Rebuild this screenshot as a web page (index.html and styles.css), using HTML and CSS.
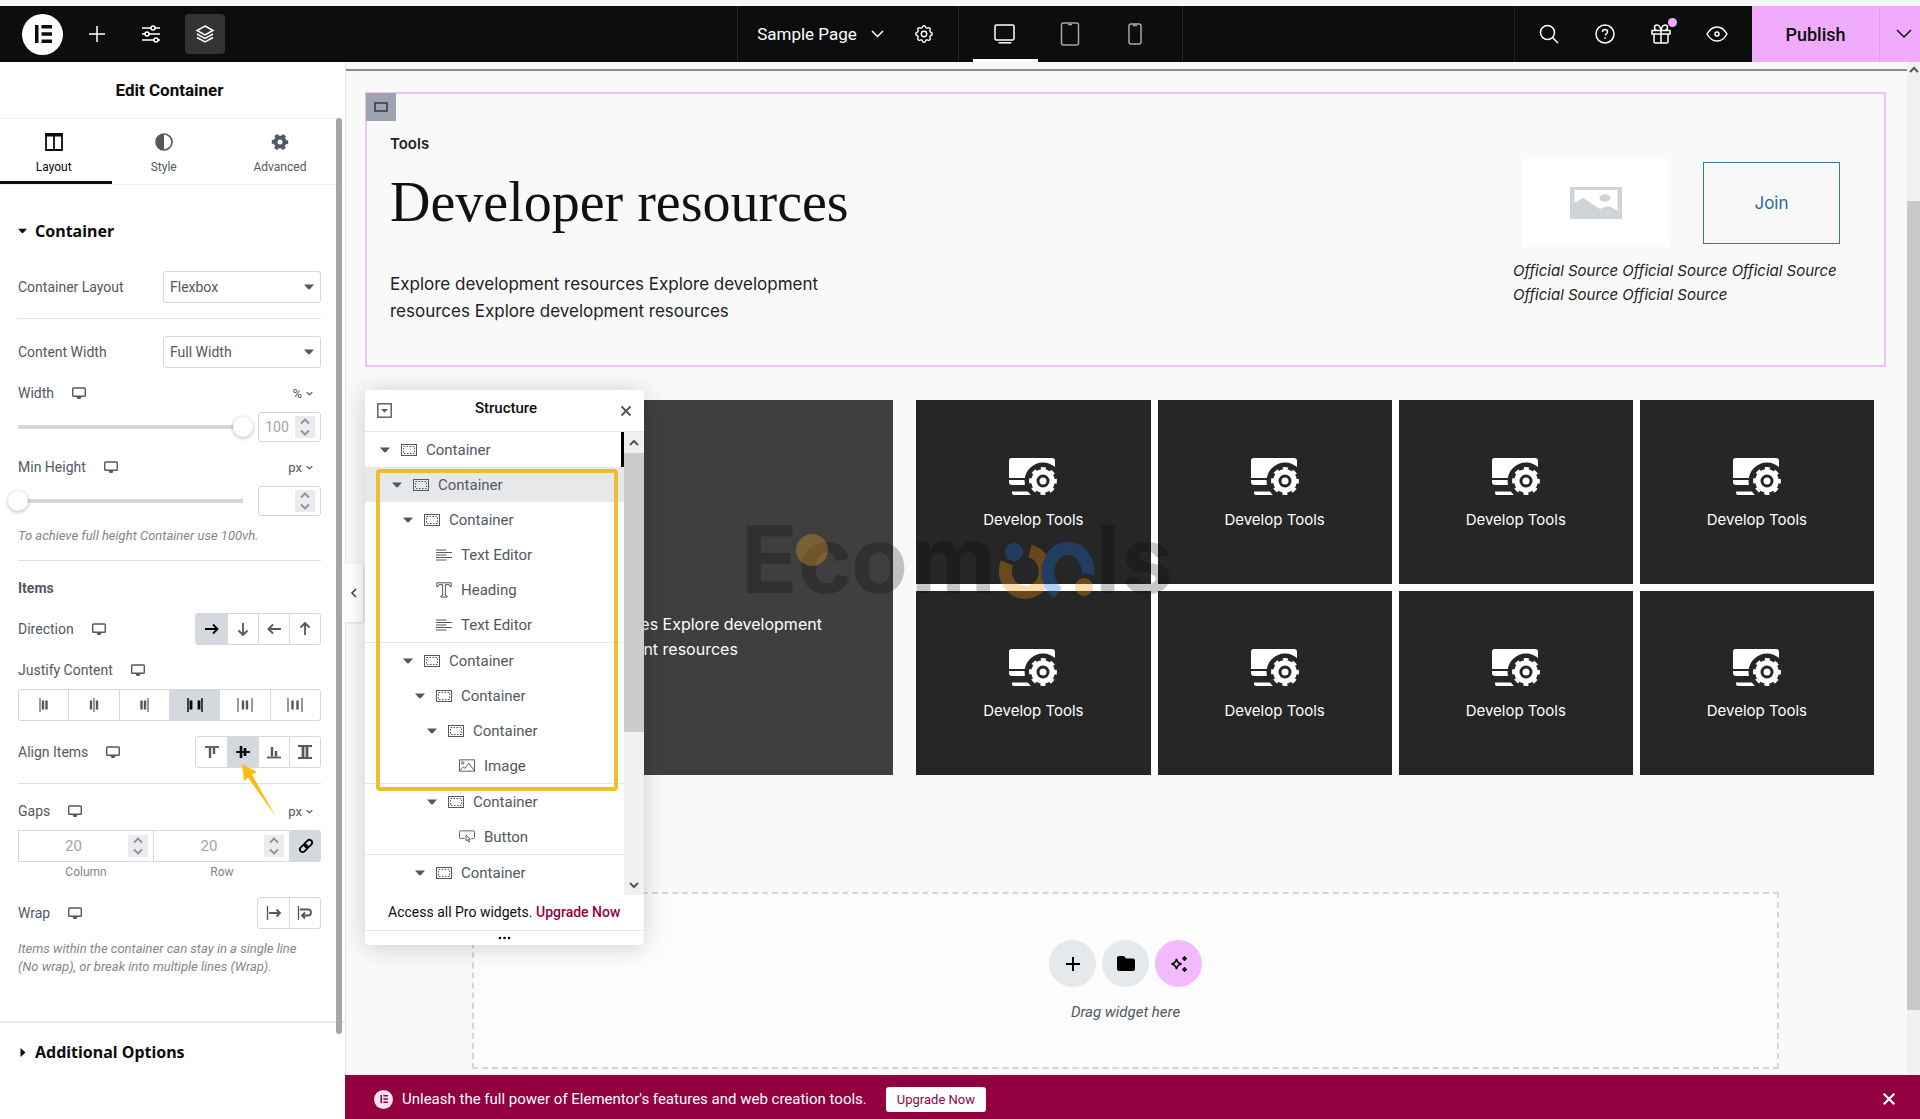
FILE: index.html
```html
<!DOCTYPE html>
<html lang="en">
<head>
    <meta charset="UTF-8">
    <meta name="viewport" content="width=device-width, initial-scale=1.0">
    <title>Sample Page - Editor</title>
    <link rel="stylesheet" href="styles.css">
</head>
<body>
<!-- Shared icons -->
<svg class="sprite" aria-hidden="true">
    <symbol id="i-screen" viewBox="0 0 14 13"><path d="M1.5 1h11q.8 0 .8.8v6.6q0 .8-.8.8h-11q-.8 0-.8-.8V1.800q0-.8.8-.8z" fill="none" stroke="currentColor" stroke-width="1.400"/><path d="M4.500 9.500h5L8.500 12h-3z" fill="currentColor"/></symbol>
    <symbol id="i-caret" viewBox="0 0 10 6"><path d="M0 .5h10L6 5q-1 .9-2 0z" fill="currentColor"/></symbol>
    <symbol id="i-chevron" viewBox="0 0 10 6"><path d="M1 1l4 4 4-4" fill="none" stroke="currentColor" stroke-width="1.800"/></symbol>
    <symbol id="i-spin" viewBox="0 0 20 22"><path d="M6 7.500l4-4 4 4M6 14.500l4 4 4-4" fill="none" stroke="#8d9197" stroke-width="1.800"/></symbol>
    <symbol id="i-box" viewBox="0 0 16 12"><rect x=".5" y=".5" width="15" height="11" fill="none" stroke="currentColor"/><rect x="2.500" y="2.500" width="11" height="7" fill="none" stroke="currentColor" stroke-dasharray="1.500 1.500"/></symbol>
    <symbol id="i-text" viewBox="0 0 16 12"><path d="M0 1h10.500M0 3.500h16M0 6h10.500M0 8.500h16M0 11h10.500" stroke="currentColor" fill="none"/></symbol>
    <symbol id="i-heading" viewBox="0 0 16 16"><path d="M.8.8h14.400v3.700h-1.400L13 2.600H9.400v11l1.800.5v1H4.800v-1l1.800-.5v-11H3l-.8 1.900H.8z" fill="none" stroke="currentColor"/></symbol>
    <symbol id="i-image" viewBox="0 0 17 13"><rect x=".5" y=".5" width="16" height="12" fill="none" stroke="currentColor"/><circle cx="4" cy="3.800" r="1.300" fill="none" stroke="currentColor"/><path d="M1 12l3.500-4 2 1.500 4-5.500 5.800 8" fill="none" stroke="currentColor"/></symbol>
    <symbol id="i-button" viewBox="0 0 17 13"><path d="M6 8.500H1.500q-1 0-1-1v-6q0-1 1-1h14q1 0 1 1v6q0 1-1 1H13" fill="none" stroke="currentColor"/><path d="M7.500 5v6l1.500-1 1.200 2.500 1.200-.5-1.200-2.500h2z" fill="none" stroke="currentColor"/></symbol>
    <symbol id="i-elementor" viewBox="0 0 18 18"><path d="M1 0h3.500v18H1zM7.500 0H18v3.500H7.500zM7.500 7.200H18v3.500H7.500zM7.500 14.500H18V18H7.500z" fill="currentColor"/></symbol>
    <symbol id="i-close" viewBox="0 0 12 12"><path d="M1.500 1.500l9 9M10.500 1.500l-9 9" fill="none" stroke="currentColor" stroke-width="2"/></symbol>
    <symbol id="i-tools" viewBox="0 0 48 37">
        <path d="M2.500 0H43q3 0 3 3v17H0V2.500Q0 0 2.500 0zM0 22h30v5H3q-3 0-3-3zM3 33.500h27V37H5q-2 0-2-2z" fill="#fff"/>
        <circle cx="34" cy="23" r="18.500" fill="#262626"/>
        <circle cx="34" cy="23" r="11.800" fill="#fff"/>
        <circle cx="34" cy="23" r="12.400" fill="none" stroke="#fff" stroke-width="3" stroke-dasharray="5 4.740" stroke-dashoffset="2.500"/>
        <circle cx="34" cy="23" r="6.500" fill="#262626"/>
        <circle cx="34" cy="23" r="3.500" fill="#fff"/>
    </symbol>
</svg>

<header class="topbar">
    <div class="bar-left">
        <button class="logo" aria-label="Menu"><svg width="18" height="18"><use href="#i-elementor"/></svg></button>
        <button class="bar-btn" aria-label="Add element"><svg width="16" height="16" viewBox="0 0 16 16"><path d="M8 0v16M0 8h16"/></svg></button>
        <button class="bar-btn" aria-label="Site settings"><svg width="18" height="18" viewBox="0 0 18 18"><path d="M0 3h9M13 3h5M0 9h3M7 9h11M0 15h12M16 15h2"/><circle cx="11" cy="3" r="2"/><circle cx="5" cy="9" r="2"/><circle cx="14" cy="15" r="2"/></svg></button>
        <button class="bar-btn active" aria-label="Structure"><svg width="18" height="18" viewBox="0 0 18 18"><path d="M9 1l8 4.500-8 4.500-8-4.500zM1 9l8 4.500L17 9M1 12.500L9 17l8-4.500"/></svg></button>
    </div>
    <div class="bar-page">
        <button class="page-name">Sample Page <svg width="13" height="8" viewBox="0 0 13 8"><path d="M1 1l5.500 5.500L12 1"/></svg></button>
        <button class="bar-btn" aria-label="Page settings"><svg width="22" height="22" viewBox="0 0 24 24"><path d="M10.325 4.317c.426-1.756 2.924-1.756 3.350 0a1.724 1.724 0 0 0 2.573 1.066c1.543-.94 3.310.826 2.370 2.370a1.724 1.724 0 0 0 1.065 2.572c1.756.426 1.756 2.924 0 3.350a1.724 1.724 0 0 0-1.066 2.573c.94 1.543-.826 3.310-2.370 2.370a1.724 1.724 0 0 0-2.572 1.065c-.426 1.756-2.924 1.756-3.350 0a1.724 1.724 0 0 0-2.573-1.066c-1.543.94-3.310-.826-2.370-2.370a1.724 1.724 0 0 0-1.065-2.572c-1.756-.426-1.756-2.924 0-3.350a1.724 1.724 0 0 0 1.066-2.573c-.94-1.543.826-3.310 2.370-2.370.996.608 2.296.07 2.572-1.065z"/><circle cx="12" cy="12" r="3"/></svg></button>
    </div>
    <div class="bar-devices">
        <button class="device active" aria-label="Desktop"><svg width="22" height="20" viewBox="0 0 22 20"><rect x="1" y="1" width="19" height="15" rx="1.500"/><path d="M4.500 18.800h13"/></svg></button>
        <button class="device" aria-label="Tablet"><svg width="20" height="24" viewBox="0 0 20 24"><rect x="1.500" y="1" width="17" height="22" rx="2"/><path d="M8 2.500h4"/></svg></button>
        <button class="device" aria-label="Mobile"><svg width="14" height="22" viewBox="0 0 14 22"><rect x="1" y="1" width="12" height="20" rx="2"/><path d="M5 2.500h4"/></svg></button>
    </div>
    <div class="bar-right">
        <div class="bar-tools">
            <button class="bar-btn" aria-label="Finder"><svg width="20" height="20" viewBox="0 0 20 20"><circle cx="8.500" cy="8.500" r="7"/><path d="M13.500 13.500L19 19"/></svg></button>
            <button class="bar-btn" aria-label="Help"><svg width="20" height="20" viewBox="0 0 20 20"><circle cx="10" cy="10" r="9"/><path d="M7.500 8q0-2.500 2.500-2.500T12.500 8q0 1.500-2.500 3M10 13.200v1.600"/></svg></button>
            <button class="bar-btn" aria-label="What's new"><svg width="20" height="20" viewBox="0 0 20 20"><path d="M1 6.500h18v3.500H1zM3 10v7.500q0 1.500 1.500 1.500h11q1.500 0 1.500-1.500V10M10 6.500V19M10 6.500Q9 1 6 1 3.500 1 3.500 3.500T6 6.500M10 6.500Q11 1 14 1q2.500 0 2.500 2.500T14 6.500"/></svg><span class="dot"></span></button>
            <button class="bar-btn" aria-label="Preview"><svg width="22" height="18" viewBox="0 0 22 18"><path d="M1 9Q5 2 11 2t10 7q-4 7-10 7T1 9z"/><circle cx="11" cy="9" r="2"/></svg></button>
        </div>
        <button class="publish">Publish</button>
        <button class="publish-more" aria-label="Save options"><svg width="16" height="10" viewBox="0 0 16 10"><path d="M1 1l7 7 7-7"/></svg></button>
    </div>
</header>

<div class="workspace">
    <aside class="panel">
        <h1 class="panel-title">Edit Container</h1>
        <nav class="tabs">
            <button class="tab active"><svg width="18" height="18" viewBox="0 0 18 18"><path d="M1 1h16v16H1zM1 2.500h16M9 2v15" fill="none" stroke="currentColor" stroke-width="1.800"/></svg>Layout</button>
            <button class="tab"><svg width="18" height="18" viewBox="0 0 18 18"><circle cx="9" cy="9" r="8" fill="none" stroke="currentColor" stroke-width="1.600"/><path d="M9 1v16A8 8 0 0 1 9 1z" fill="currentColor"/></svg>Style</button>
            <button class="tab"><svg width="18" height="18" viewBox="0 0 18 18"><circle cx="9" cy="9" r="4.500" fill="none" stroke="currentColor" stroke-width="4"/><circle cx="9" cy="9" r="7" fill="none" stroke="currentColor" stroke-width="2.600" stroke-dasharray="3.800 3.530" stroke-dashoffset="1.900"/></svg>Advanced</button>
        </nav>

        <div class="panel-body">
            <section class="group">
                <h2 class="group-title"><svg width="9" height="6"><use href="#i-caret"/></svg>Container</h2>

                <div class="control">
                    <label for="layout">Container Layout</label>
                    <span class="select"><select id="layout"><option>Flexbox</option><option>Grid</option></select><svg width="10" height="6"><use href="#i-caret"/></svg></span>
                </div>
                <hr>
                <div class="control">
                    <label for="contentWidth">Content Width</label>
                    <span class="select"><select id="contentWidth"><option>Full Width</option><option>Boxed</option></select><svg width="10" height="6"><use href="#i-caret"/></svg></span>
                </div>

                <div class="control stacked">
                    <div class="control-head">
                        <label for="width">Width</label><svg class="screen" width="14" height="13"><use href="#i-screen"/></svg>
                        <button class="unit">% <svg width="7" height="5"><use href="#i-chevron"/></svg></button>
                    </div>
                    <div class="slider-row">
                        <input type="range" id="width" min="0" max="100" value="100">
                        <span class="number"><input type="number" aria-label="Width value" value="100"><svg width="20" height="22"><use href="#i-spin"/></svg></span>
                    </div>
                </div>
                <div class="control stacked">
                    <div class="control-head">
                        <label for="minHeight">Min Height</label><svg class="screen" width="14" height="13"><use href="#i-screen"/></svg>
                        <button class="unit">px <svg width="7" height="5"><use href="#i-chevron"/></svg></button>
                    </div>
                    <div class="slider-row">
                        <input type="range" id="minHeight" min="0" max="1000" value="0">
                        <span class="number"><input type="number" aria-label="Min height value"><svg width="20" height="22"><use href="#i-spin"/></svg></span>
                    </div>
                    <p class="help">To achieve full height Container use 100vh.</p>
                </div>
                <hr>
                <h3 class="subhead">Items</h3>

                <div class="control">
                    <span>Direction</span><svg class="screen" width="14" height="13"><use href="#i-screen"/></svg>
                    <div class="choices">
                        <button class="active" aria-label="Row"><svg width="14" height="12" viewBox="0 0 14 12"><path d="M0 6h12M8 1.500L12.500 6 8 10.500"/></svg></button>
                        <button aria-label="Column"><svg width="12" height="14" viewBox="0 0 12 14"><path d="M6 1v12M1.500 8.500L6 13l4.500-4.500"/></svg></button>
                        <button aria-label="Row reversed"><svg width="14" height="12" viewBox="0 0 14 12"><path d="M14 6H2M6 1.500L1.500 6 6 10.500"/></svg></button>
                        <button aria-label="Column reversed"><svg width="12" height="14" viewBox="0 0 12 14"><path d="M6 13V1M1.500 5.500L6 1l4.500 4.500"/></svg></button>
                    </div>
                </div>

                <div class="control stacked">
                    <div class="control-head"><span>Justify Content</span><svg class="screen" width="14" height="13"><use href="#i-screen"/></svg></div>
                    <div class="choices wide">
                        <button aria-label="Start"><svg width="14" height="14" viewBox="0 0 14 14"><path d="M3 0v14" stroke-width="1.200"/><path d="M6 2.500v9M9.500 2.500v9" stroke-width="2.400"/></svg></button>
                        <button aria-label="Center"><svg width="14" height="14" viewBox="0 0 14 14"><path d="M7 0v14" stroke-width="1.200"/><path d="M4 2.500v9M10 2.500v9" stroke-width="2.400"/></svg></button>
                        <button aria-label="End"><svg width="14" height="14" viewBox="0 0 14 14"><path d="M11 0v14" stroke-width="1.200"/><path d="M4.500 2.500v9M8 2.500v9" stroke-width="2.400"/></svg></button>
                        <button class="active" aria-label="Space between"><svg width="16" height="14" viewBox="0 0 16 14"><path d="M1 0v14M15 0v14" stroke-width="1.400"/><path d="M4 2.500v9M12 2.500v9" stroke-width="2.800"/></svg></button>
                        <button aria-label="Space around"><svg width="16" height="14" viewBox="0 0 16 14"><path d="M1 0v14M15 0v14" stroke-width="1.200"/><path d="M6 2.500v9M10 2.500v9" stroke-width="2.400"/></svg></button>
                        <button aria-label="Space evenly"><svg width="16" height="14" viewBox="0 0 16 14"><path d="M1 0v14M15 0v14" stroke-width="1.200"/><path d="M5.500 2.500v9M10.500 2.500v9" stroke-width="2.400"/></svg></button>
                    </div>
                </div>

                <div class="control align">
                    <span>Align Items</span><svg class="screen" width="14" height="13"><use href="#i-screen"/></svg>
                    <div class="choices">
                        <button aria-label="Align start"><svg width="14" height="14" viewBox="0 0 14 14"><path d="M0 2h14"/><path d="M5 3v10M9 3v6" stroke-width="2.400"/></svg></button>
                        <button class="active" aria-label="Align center"><svg width="14" height="14" viewBox="0 0 14 14"><path d="M0 7h14"/><path d="M5 1v12M9 3v8" stroke-width="2.600"/></svg></button>
                        <button aria-label="Align end"><svg width="14" height="14" viewBox="0 0 14 14"><path d="M0 12.500h14"/><path d="M5 2v9.500M9 6v5.500" stroke-width="2.400"/></svg></button>
                        <button aria-label="Stretch"><svg width="14" height="14" viewBox="0 0 14 14"><path d="M0 1h14M0 13h14"/><path d="M5 2v10M9 2v10" stroke-width="2.800"/></svg></button>
                    </div>
                    <svg class="pointer" width="36" height="54" viewBox="0 0 36 54"><path d="M1 0l15 8-5 2.500L35 53 7 13.500 3 17z" fill="#fdbc11"/></svg>
                </div>
                <hr>
                <div class="control stacked">
                    <div class="control-head">
                        <span>Gaps</span><svg class="screen" width="14" height="13"><use href="#i-screen"/></svg>
                        <button class="unit">px <svg width="7" height="5"><use href="#i-chevron"/></svg></button>
                    </div>
                    <div class="gaps">
                        <div class="gap"><span class="number"><input type="number" id="gapColumn" value="20"><svg width="20" height="22"><use href="#i-spin"/></svg></span><label for="gapColumn">Column</label></div>
                        <div class="gap"><span class="number"><input type="number" id="gapRow" value="20"><svg width="20" height="22"><use href="#i-spin"/></svg></span><label for="gapRow">Row</label></div>
                        <button class="link" aria-label="Link values"><svg width="14" height="14" viewBox="0 0 14 14"><g transform="rotate(-45 7 7)" fill="none" stroke="currentColor" stroke-width="1.800"><rect x="-.5" y="4.300" width="8.500" height="5.400" rx="2.700"/><rect x="6" y="4.300" width="8.500" height="5.400" rx="2.700"/></g></svg></button>
                    </div>
                </div>

                <div class="control">
                    <span>Wrap</span><svg class="screen" width="14" height="13"><use href="#i-screen"/></svg>
                    <div class="choices">
                        <button aria-label="No wrap"><svg width="16" height="14" viewBox="0 0 16 14"><path d="M1.500 0v14" stroke-width="1.400"/><path d="M3 7h11M10.500 3.500L14 7l-3.500 3.500"/></svg></button>
                        <button aria-label="Wrap"><svg width="16" height="14" viewBox="0 0 16 14"><path d="M1.500 0v14" stroke-width="1.400"/><path d="M3 3.500h8q3 0 3 3t-3 3H5M8 6.500l-3 3 3 3"/></svg></button>
                    </div>
                </div>
                <p class="help">Items within the container can stay in a single line (No wrap), or break into multiple lines (Wrap).</p>
            </section>
            <section class="group collapsed">
                <h2 class="group-title"><svg width="6" height="9" viewBox="0 0 6 9"><path d="M.5 0v9L5 5q.8-.5 0-1z" fill="currentColor"/></svg>Additional Options</h2>
            </section>
        </div>
        <span class="panel-scroll"></span>
    </aside>

    <div class="stage">
        <main class="canvas">
            <section class="hero">
                <button class="handle" aria-label="Edit container"><svg width="14" height="10" viewBox="0 0 14 10"><rect x="1" y="1" width="12" height="8" fill="none" stroke="#2b2f33" stroke-width="1.400"/></svg></button>
                <div class="intro">
                    <p class="kicker">Tools</p>
                    <h2>Developer resources</h2>
                    <p class="lead">Explore development resources Explore development resources Explore development resources</p>
                </div>
                <div class="source">
                    <div class="source-row">
                        <div class="placeholder"><svg width="52" height="32" viewBox="0 0 52 32"><rect width="52" height="32" fill="#d0d3d7"/><rect x="4.500" y="3" width="43" height="26" fill="#fff"/><ellipse cx="35" cy="11" rx="5.500" ry="3.800" fill="#d0d3d7"/><path d="M2 17l4-2 7-4 17 11q6-4 11-2l7 4v7H2z" fill="#d0d3d7"/></svg></div>
                        <a class="join" href="#">Join</a>
                    </div>
                    <p>Official Source Official Source Official Source Official Source Official Source</p>
                </div>
            </section>

            <section class="cards">
                <div class="card-lead"><p>Explore development resources Explore development resources Explore development resources</p></div>
                <div class="tiles">
                    <div class="tile"><svg width="48" height="37"><use href="#i-tools"/></svg>Develop Tools</div>
                    <div class="tile"><svg width="48" height="37"><use href="#i-tools"/></svg>Develop Tools</div>
                    <div class="tile"><svg width="48" height="37"><use href="#i-tools"/></svg>Develop Tools</div>
                    <div class="tile"><svg width="48" height="37"><use href="#i-tools"/></svg>Develop Tools</div>
                    <div class="tile"><svg width="48" height="37"><use href="#i-tools"/></svg>Develop Tools</div>
                    <div class="tile"><svg width="48" height="37"><use href="#i-tools"/></svg>Develop Tools</div>
                    <div class="tile"><svg width="48" height="37"><use href="#i-tools"/></svg>Develop Tools</div>
                    <div class="tile"><svg width="48" height="37"><use href="#i-tools"/></svg>Develop Tools</div>
                </div>
                <svg class="watermark" width="430" height="84" viewBox="0 0 430 84">
                    <g opacity=".22">
                        <text x="-6" y="75">E</text><text x="51" y="75">c</text><text x="104" y="75">o</text><text x="164" y="75">m</text><text x="348" y="75">l</text><text x="374" y="75">s</text>
                    </g>
                    <g opacity=".32" fill="none" stroke-width="13">
                        <circle cx="65" cy="32" r="16" fill="#f5a623" stroke="none"/>
                        <path d="M260 45a20 21 0 1 0 23-12" stroke="#f5940a"/>
                        <circle cx="267" cy="34" r="9" fill="#1b6fe0" stroke="none"/>
                        <path d="M311 75a20 24 0 1 1 30-19" stroke="#1b6fe0"/>
                        <circle cx="337" cy="69" r="9" fill="#f5940a" stroke="none"/>
                    </g>
                </svg>
            </section>

            <section class="dropzone">
                <div class="drop-actions">
                    <button aria-label="Add container"><svg width="14" height="14" viewBox="0 0 14 14"><path d="M7 0v14M0 7h14" stroke="#000" stroke-width="2"/></svg></button>
                    <button aria-label="Add template"><svg width="18" height="15" viewBox="0 0 18 15"><path d="M2 0h5l2 2.500h7q2 0 2 2V13q0 2-2 2H2q-2 0-2-2V2q0-2 2-2z"/></svg></button>
                    <button class="ai" aria-label="Build with AI"><svg width="18" height="16" viewBox="0 0 18 16"><path d="M6.500 3q.8 4.200 5 5-4.200.8-5 5-.8-4.200-5-5 4.200-.8 5-5z" fill="none" stroke="#0c0d0e" stroke-width="1.600"/><path d="M14.500 0q.5 2 2.500 2.500-2 .5-2.500 2.500-.5-2-2.500-2.500 2-.5 2.500-2.500zM14.500 11q.5 2 2.500 2.500-2 .5-2.500 2.500-.5-2-2.500-2.500 2-.5 2.500-2.500z" stroke="#0c0d0e"/></svg></button>
                </div>
                <p>Drag widget here</p>
            </section>
            <div class="page-scroll"><svg width="10" height="7" viewBox="0 0 10 7"><path d="M1 6l4-4 4 4" fill="none" stroke="#555" stroke-width="2"/></svg><span></span></div>
        </main>

        <footer class="promo">
            <span class="promo-logo"><svg width="8" height="8"><use href="#i-elementor"/></svg></span>
            <p>Unleash the full power of Elementor's features and web creation tools.</p>
            <a href="#">Upgrade Now</a>
            <button aria-label="Close"><svg width="14" height="14"><use href="#i-close"/></svg></button>
        </footer>

        <button class="collapse" aria-label="Hide panel"><svg width="6" height="10" viewBox="0 0 6 10"><path d="M5 1L1 5l4 4" fill="none" stroke="#3f444b" stroke-width="1.600"/></svg></button>

        <!-- Floating structure window -->
        <div class="structure">
            <div class="structure-head">
                <svg width="15" height="15" viewBox="0 0 15 15"><rect x=".8" y=".8" width="13.400" height="13.400" fill="none" stroke="#515962" stroke-width="1.400"/><path d="M4 6h7l-3.500 3.500z" fill="#515962"/></svg>
                <h2>Structure</h2>
                <button aria-label="Close structure"><svg width="12" height="12"><use href="#i-close"/></svg></button>
            </div>
            <div class="structure-body">
                <ul class="tree">
                    <li class="l0 current"><svg width="10" height="6"><use href="#i-caret"/></svg><svg width="16" height="12"><use href="#i-box"/></svg>Container</li>
                    <li class="l1 selected"><svg width="10" height="6"><use href="#i-caret"/></svg><svg width="16" height="12"><use href="#i-box"/></svg>Container</li>
                    <li class="l2"><svg width="10" height="6"><use href="#i-caret"/></svg><svg width="16" height="12"><use href="#i-box"/></svg>Container</li>
                    <li class="l3 leaf"><svg width="16" height="12"><use href="#i-text"/></svg>Text Editor</li>
                    <li class="l3 leaf"><svg width="16" height="16"><use href="#i-heading"/></svg>Heading</li>
                    <li class="l3 leaf"><svg width="16" height="12"><use href="#i-text"/></svg>Text Editor</li>
                    <li class="l2 ruled"><svg width="10" height="6"><use href="#i-caret"/></svg><svg width="16" height="12"><use href="#i-box"/></svg>Container</li>
                    <li class="l3"><svg width="10" height="6"><use href="#i-caret"/></svg><svg width="16" height="12"><use href="#i-box"/></svg>Container</li>
                    <li class="l4"><svg width="10" height="6"><use href="#i-caret"/></svg><svg width="16" height="12"><use href="#i-box"/></svg>Container</li>
                    <li class="l5 leaf"><svg width="16" height="13"><use href="#i-image"/></svg>Image</li>
                    <li class="l4 ruled"><svg width="10" height="6"><use href="#i-caret"/></svg><svg width="16" height="12"><use href="#i-box"/></svg>Container</li>
                    <li class="l5 leaf"><svg width="16" height="13"><use href="#i-button"/></svg>Button</li>
                    <li class="l3 ruled"><svg width="10" height="6"><use href="#i-caret"/></svg><svg width="16" height="12"><use href="#i-box"/></svg>Container</li>
                </ul>
                <div class="tree-scroll">
                    <svg width="10" height="7" viewBox="0 0 10 7"><path d="M1 6l4-4 4 4" fill="none" stroke="#555" stroke-width="2"/></svg>
                    <span></span>
                    <svg width="10" height="7" viewBox="0 0 10 7"><path d="M1 1l4 4 4-4" fill="none" stroke="#555" stroke-width="2"/></svg>
                </div>
            </div>
            <p class="structure-pro">Access all Pro widgets. <a href="#">Upgrade Now</a></p>
            <div class="structure-grip"><svg width="13" height="4" viewBox="0 0 13 4"><circle cx="2" cy="2" r="1.300"/><circle cx="6.500" cy="2" r="1.300"/><circle cx="11" cy="2" r="1.300"/></svg></div>
            <span class="highlight"></span>
        </div>
    </div>
</div>
</body>
</html>
```

FILE: styles.css
```css
* {
    box-sizing: border-box;
}
body {
    margin: 0;
    height: 100vh;
    display: flex;
    flex-direction: column;
    overflow: hidden;
    font-family: Roboto, sans-serif;
    font-size: 15px;
    color: #515962;
    background: #fff;
}
h1, h2, h3, p, ul {
    margin: 0;
    padding: 0;
}
button {
    display: flex;
    align-items: center;
    justify-content: center;
    padding: 0;
    border: none;
    background: none;
    color: inherit;
    font: inherit;
    cursor: pointer;
}
svg {
    flex: none;
    overflow: visible;
}
.sprite {
    position: absolute;
    width: 0;
    height: 0;
}

/* Top bar */
.topbar {
    display: grid;
    grid-template-columns: 1fr auto auto 1fr;
    flex: none;
    height: 62px;
    border-top: 6px solid #f6f7f8;
    background: #0c0d0e;
    color: #fff;
}
.topbar svg {
    fill: none;
    stroke: currentColor;
    stroke-width: 1.5px;
}
.bar-left, .bar-page, .bar-devices, .bar-right, .bar-tools {
    display: flex;
    align-items: center;
}
.bar-left {
    gap: 14px;
    padding-left: 22px;
}
.logo {
    width: 41px;
    height: 41px;
    border-radius: 50%;
    background: #fff;
    color: #0c0d0e;
}
.topbar .logo svg {
    stroke: none;
}
.bar-btn {
    position: relative;
    width: 40px;
    height: 40px;
    border-radius: 4px;
}
.bar-btn.active {
    background: #313335;
}
.bar-page {
    padding: 0 14px 0 19px;
    border-left: 1px solid #222427;
}
.page-name {
    gap: 14px;
    margin-right: 20px;
    font-size: 17px;
}
.bar-devices {
    align-items: stretch;
    padding: 0 14px;
    border: solid #222427;
    border-width: 0 1px;
}
.device {
    width: 65px;
    color: #a4a7aa;
}
.device.active {
    color: #fff;
    box-shadow: inset 0 -3px #fff;
}
.bar-right {
    align-items: stretch;
    justify-content: flex-end;
}
.bar-tools {
    gap: 16px;
    padding: 0 15px 0 14px;
    border-left: 1px solid #222427;
}
.dot {
    position: absolute;
    top: 4px;
    right: 4px;
    width: 9px;
    height: 9px;
    border-radius: 50%;
    background: #f0abfc;
}
.publish {
    width: 127px;
    background: #f0abfc;
    color: #0c0d0e;
    font-size: 18px;
    font-weight: 500;
}
.publish-more {
    width: 41px;
    padding-left: 8px;
    border-left: 1px solid #e29bee;
    background: #f0abfc;
    color: #0c0d0e;
}

/* Left panel */
.workspace {
    display: flex;
    flex: 1;
    min-height: 0;
}
.panel {
    position: relative;
    width: 345px;
    flex: none;
    overflow: hidden;
}
.panel-title {
    padding-right: 6px;
    line-height: 56px;
    font-size: 17px;
    font-weight: 700;
    text-align: center;
    color: #0c0d0e;
}
.tabs {
    display: flex;
    height: 67px;
    border: solid #f1f2f3;
    border-width: 1px 0;
}
.tab {
    flex: 104;
    flex-direction: column;
    gap: 9px;
    padding-top: 3px;
    font-size: 12px;
}
.tab:first-child {
    flex: 109;
    padding-right: 5px;
}
.tab:last-child {
    flex: 132;
}
.tab.active {
    color: #0c0d0e;
    box-shadow: inset 0 -3px #0c0d0e;
}
.panel-scroll {
    position: absolute;
    top: 56px;
    right: 3px;
    bottom: 85px;
    width: 6px;
    border-radius: 3px;
    background: #a6a6a6;
}
.group {
    padding: 30px 24px 45px 18px;
    border-bottom: 2px solid #e9eaec;
}
.group.collapsed {
    padding: 13px 18px;
    border: none;
}
.group-title {
    display: flex;
    align-items: center;
    gap: 8px;
    height: 32px;
    margin-bottom: 24px;
    font-family: "Noto Sans", sans-serif;
    font-size: 16px;
    color: #0c0d0e;
}
.group.collapsed .group-title {
    gap: 9px;
    padding-left: 2px;
}
.group hr {
    margin: 1px 0 17px;
    border: none;
    border-top: 1px solid #dfe1e4;
}
.control {
    display: flex;
    align-items: center;
    min-height: 32px;
    margin-bottom: 15px;
    font-size: 14px;
}
.control.stacked {
    flex-direction: column;
    align-items: stretch;
    gap: 9px;
}
.control-head {
    display: flex;
    align-items: center;
    height: 20px;
}
.screen {
    margin-left: 18px;
}
.unit {
    gap: 4px;
    margin-left: auto;
    margin-right: 8px;
    font-size: 13px;
}
.subhead {
    height: 20px;
    margin-bottom: 15px;
    line-height: 20px;
    font-size: 14px;
    font-weight: 700;
}
.help {
    margin-top: 2px;
    padding-right: 10px;
    line-height: 18px;
    font-size: 13px;
    font-style: italic;
    color: #7f868d;
}
.control + .help {
    margin-top: -4px;
}
.select {
    position: relative;
    width: 158px;
    margin-left: auto;
}
.select select {
    width: 100%;
    height: 32px;
    padding: 0 6px;
    border: 1px solid #d5d8dc;
    border-radius: 3px;
    appearance: none;
    background: #fff;
    color: inherit;
    font: inherit;
}
.select svg {
    position: absolute;
    top: 13px;
    right: 7px;
    pointer-events: none;
}
.slider-row {
    display: flex;
    align-items: center;
    gap: 5px;
}
input[type="range"] {
    flex: 1;
    min-width: 0;
    height: 20px;
    margin: 0 0 0 -10px;
    appearance: none;
    background: linear-gradient(#d5d8dc, #d5d8dc) center / calc(100% - 20px) 4px no-repeat;
}
input[type="range"]::-webkit-slider-thumb {
    appearance: none;
    width: 20px;
    height: 20px;
    border-radius: 50%;
    background: #fff;
    box-shadow: 0 1px 4px rgba(0, 0, 0, 0.3);
}
.number {
    display: flex;
    align-items: center;
    width: 63px;
    height: 30px;
    padding-right: 5px;
    border: 1px solid #d5d8dc;
    border-radius: 3px;
}
.number input {
    flex: 1;
    min-width: 0;
    width: 0;
    padding: 0;
    border: none;
    appearance: textfield;
    background: none;
    font: inherit;
    color: #9da5ae;
    text-align: center;
}
.number svg {
    background: #ebebef;
}
input[type="number"]::-webkit-inner-spin-button {
    appearance: none;
}
.choices {
    display: flex;
    margin-left: auto;
    border: 1px solid #d5d8dc;
    border-radius: 3px;
}
.choices button {
    width: 31px;
    height: 30px;
}
.choices button + button {
    border-left: 1px solid #d5d8dc;
}
.choices button.active {
    background: #d5d8df;
    color: #000;
}
.choices svg {
    fill: none;
    stroke: currentColor;
    stroke-width: 1.8px;
}
.choices.wide {
    align-self: stretch;
    margin: 0;
}
.choices.wide button {
    flex: 1;
}
.control.align {
    position: relative;
}
.pointer {
    position: absolute;
    top: 28px;
    right: 44px;
}
.gaps {
    display: flex;
}
.gap {
    flex: 1;
    text-align: center;
    font-size: 12px;
    color: #7f868d;
}
.gap .number {
    width: auto;
    height: 32px;
    border-radius: 0;
    font-size: 15px;
}
.gap + .gap .number {
    border-left: none;
}
.gap label {
    display: block;
    line-height: 20px;
}
.link {
    width: 31px;
    height: 32px;
    border-radius: 0 3px 3px 0;
    background: #d5d8df;
    color: #000;
}

/* Canvas */
.stage {
    position: relative;
    display: flex;
    flex: 1;
    flex-direction: column;
    min-width: 0;
}
.canvas {
    position: relative;
    flex: 1;
    min-height: 0;
    overflow: hidden;
    padding: 30px 34px 0 19px;
    border-left: 1px solid #e8e8ea;
    background: linear-gradient(#8c8c8c, #8c8c8c) 0 7px / 100% 2px no-repeat #f9f9f9;
    font-family: Inter, sans-serif;
    color: #222;
}
.hero {
    position: relative;
    display: flex;
    justify-content: space-between;
    min-height: 275px;
    padding: 40px 44px 40px 23px;
    border: 2px solid #ebc5f0;
}
.handle {
    position: absolute;
    top: -1px;
    left: -1px;
    width: 30px;
    height: 28px;
    background: #9da3b0;
}
.intro {
    width: 470px;
}
.kicker {
    line-height: 20px;
    font-size: 15px;
    font-weight: 600;
}
.intro h2 {
    margin: 18px 0 39px;
    line-height: 60px;
    font-family: "Liberation Serif", serif;
    font-size: 56px;
    font-weight: 400;
    color: #111;
}
.lead {
    line-height: 27px;
    font-size: 17px;
}
.source {
    width: 327px;
    padding-top: 25px;
}
.source-row {
    display: flex;
    align-items: center;
    justify-content: space-between;
    margin-bottom: 12px;
    padding-left: 9px;
}
.placeholder {
    display: flex;
    align-items: center;
    justify-content: center;
    width: 147px;
    height: 88px;
    background: #fff;
}
.join {
    width: 137px;
    border: 1px solid #3a76a8;
    line-height: 80px;
    font-size: 17px;
    text-align: center;
    text-decoration: none;
    color: #2b6a9e;
}
.source p {
    line-height: 24px;
    font-size: 15px;
    font-style: italic;
}
.cards {
    position: relative;
    display: grid;
    grid-template-columns: 516fr 957fr;
    gap: 23px;
    margin: 33px 12px 0;
}
.card-lead {
    padding: 212px 35px 0 42px;
    background: #3f3f3f;
}
.card-lead p {
    max-width: 430px;
    line-height: 25px;
    font-size: 16px;
    color: #fff;
}
.tiles {
    display: grid;
    grid-template-columns: repeat(4, 1fr);
    gap: 7px;
    background: #fff;
}
.tile {
    display: flex;
    flex-direction: column;
    align-items: center;
    gap: 14px;
    height: 184px;
    padding-top: 58px;
    background: #262626;
    line-height: 22px;
    font-size: 15px;
    color: #fff;
}
.watermark {
    position: absolute;
    top: 118px;
    left: 370px;
    font-size: 93px;
    font-weight: 700;
}
.dropzone {
    margin: 117px 107px 0 107px;
    padding: 46px 0 45px;
    border: 2px dashed #d5d5d5;
    background: #fcfcfc;
    text-align: center;
}
.drop-actions {
    display: flex;
    justify-content: center;
    gap: 6px;
    margin-bottom: 15px;
}
.drop-actions button {
    width: 47px;
    height: 47px;
    border-radius: 50%;
    background: #e6e9ec;
}
.drop-actions .ai {
    background: #f3bafd;
}
.dropzone p {
    line-height: 20px;
    font-family: Roboto, sans-serif;
    font-size: 15px;
    font-style: italic;
    color: #515962;
}
.page-scroll {
    position: absolute;
    top: 0;
    right: 0;
    bottom: 0;
    width: 13px;
    padding: 4px 2px 0;
    background: #f0f0f0;
    overflow: hidden;
}
.page-scroll svg {
    display: block;
}
.page-scroll span {
    position: absolute;
    top: 139px;
    right: 0;
    bottom: 65px;
    width: 13px;
    background: #c9c9c9;
}

/* Upgrade notice */
.promo {
    display: flex;
    align-items: center;
    flex: none;
    height: 44px;
    padding: 4px 24px 0 29px;
    background: #93003f;
    color: #fff;
}
.promo-logo {
    display: flex;
    align-items: center;
    justify-content: center;
    width: 19px;
    height: 19px;
    margin-right: 9px;
    border-radius: 50%;
    background: #fbe3ee;
    color: #93003f;
}
.promo a {
    margin-left: 19px;
    padding: 0 11px;
    border-radius: 3px;
    background: #fff;
    line-height: 25px;
    font-size: 13px;
    text-decoration: none;
    color: #93003f;
}
.promo button {
    margin-left: auto;
}
.collapse {
    position: absolute;
    top: 502px;
    left: 0;
    width: 18px;
    height: 58px;
    border-radius: 0 3px 3px 0;
    background: #fff;
    box-shadow: 1px 1px 3px rgba(0, 0, 0, 0.12);
}

/* Structure window */
.structure {
    position: absolute;
    top: 328px;
    left: 20px;
    width: 279px;
    border-radius: 4px;
    background: #fff;
    box-shadow: 0 2px 24px rgba(0, 0, 0, 0.18);
}
.structure-head {
    display: flex;
    align-items: center;
    justify-content: space-between;
    height: 42px;
    padding: 0 12px;
    border-bottom: 1px solid #e6e8ea;
}
.structure-head h2 {
    padding-bottom: 5px;
    font-size: 15px;
    font-weight: 500;
    color: #0c0d0e;
}
.structure-body {
    display: flex;
    height: 463px;
    overflow: hidden;
}
.tree {
    flex: 1;
    list-style: none;
    font-size: 15px;
}
.tree li {
    display: flex;
    align-items: center;
    height: 35px;
}
.tree li svg + svg {
    margin-left: 11px;
}
.tree li svg:last-of-type {
    margin-right: 9px;
}
.tree .ruled {
    height: 36px;
    border-top: 1px solid #e6e8ea;
}
.tree .current {
    border-right: 3px solid #000;
}
.tree .selected {
    background: #e6e8ea;
}
.l0 { padding-left: 15px; }
.l1 { padding-left: 27px; }
.l2 { padding-left: 38px; }
.l3 { padding-left: 50px; }
.l4 { padding-left: 62px; }
.l3.leaf { padding-left: 71px; }
.l5.leaf { padding-left: 94px; }
.tree-scroll {
    display: flex;
    flex-direction: column;
    align-items: center;
    width: 20px;
    padding: 7px 0 6px;
    background: #f0f0f0;
}
.tree-scroll span {
    width: 20px;
    height: 279px;
    margin: 7px 0 auto;
    background: #cbcbcb;
}
.structure-pro {
    height: 35px;
    padding-left: 23px;
    line-height: 34px;
    font-size: 14px;
    color: #0c0d0e;
}
.structure-pro a {
    font-weight: 500;
    text-decoration: none;
    color: #93003f;
}
.structure-grip {
    display: flex;
    align-items: center;
    justify-content: center;
    height: 15px;
    border-top: 1px solid #e6e8ea;
}
.highlight {
    position: absolute;
    top: 79px;
    left: 11px;
    width: 242px;
    height: 322px;
    border: 4px solid #efbe2f;
    border-radius: 4px;
    pointer-events: none;
}
```
